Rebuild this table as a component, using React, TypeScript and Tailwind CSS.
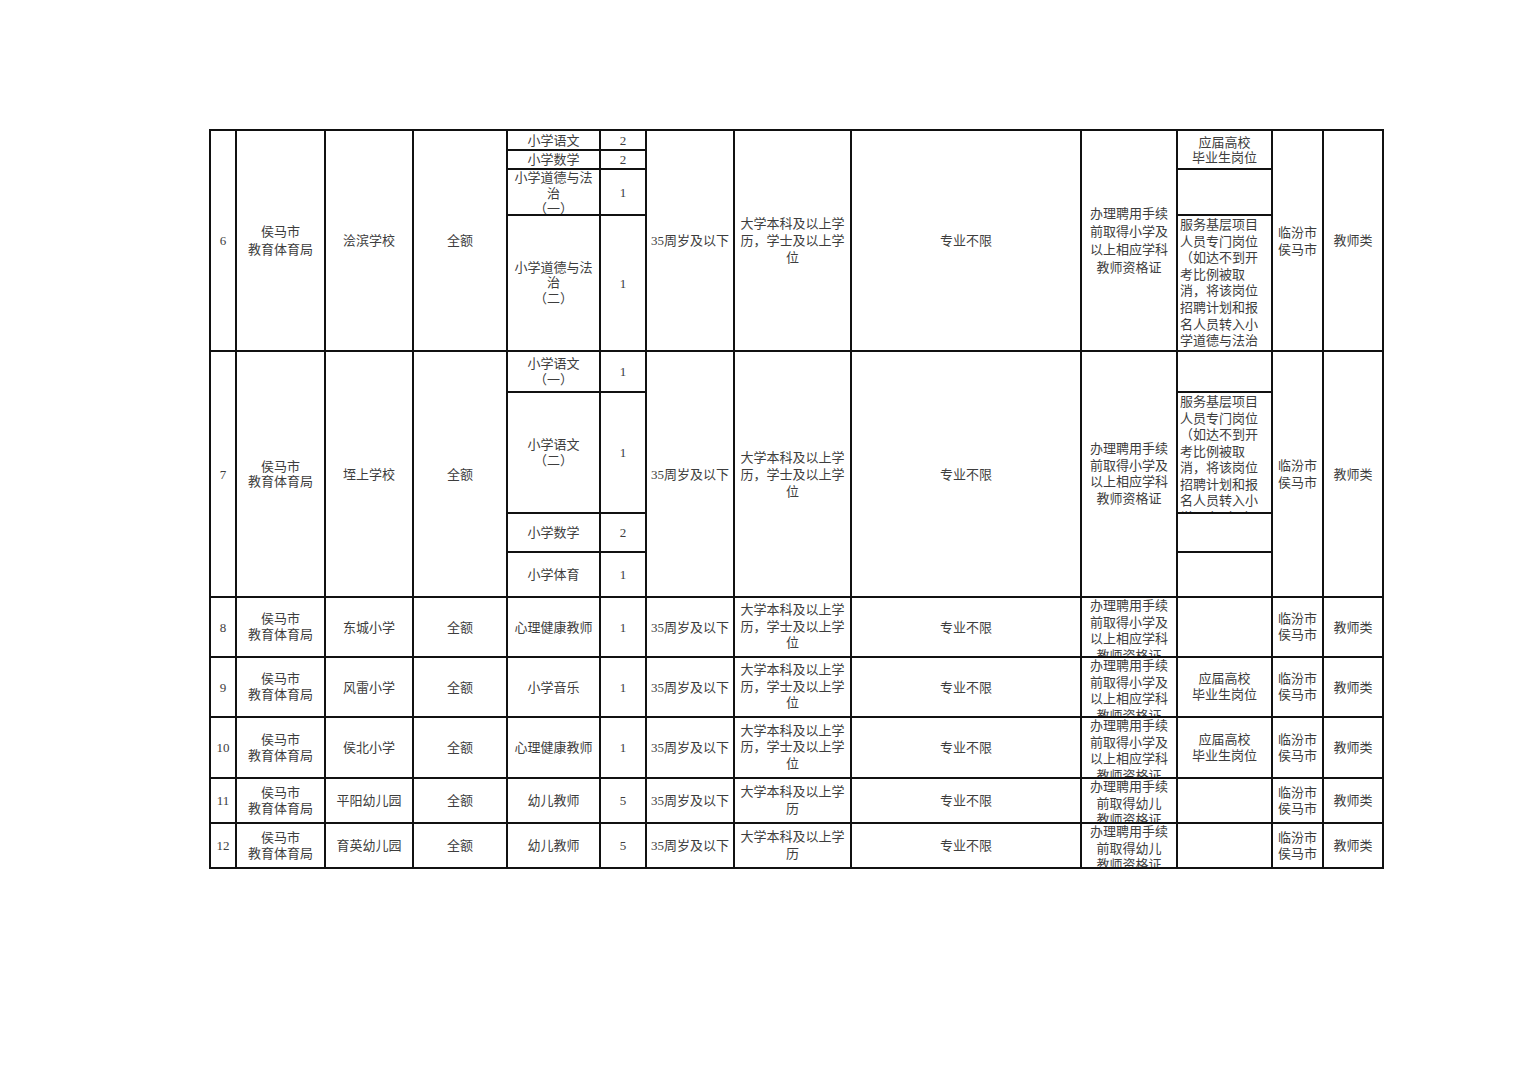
import type { ReactNode } from 'react'

// column interiors (lines are 2px, drawn by the grid gap)
// 序号 主管部门 单位 经费 岗位 人数 年龄 学历 专业 其他 备注 地点 类别
const cols = [
    'col-start-1',
    'col-start-2',
    'col-start-3',
    'col-start-4',
    'col-start-5',
    'col-start-6',
    'col-start-7',
    'col-start-8',
    'col-start-9',
    'col-start-10',
    'col-start-11',
    'col-start-12',
    'col-start-13',
]

const degree = ['大学本科及以上学', '历，学士及以上学', '位']
const degreeShort = ['大学本科及以上学', '历']
const certPrimary = ['办理聘用手续', '前取得小学及', '以上相应学科', '教师资格证']
const certKinder = ['办理聘用手续', '前取得幼儿', '教师资格证']
const fresh = ['应届高校', '毕业生岗位']
const bureau = ['侯马市', '教育体育局']
const place = ['临汾市', '侯马市']

const serviceMoral = [
    '服务基层项目',
    '人员专门岗位',
    '（如达不到开',
    '考比例被取',
    '消，将该岗位',
    '招聘计划和报',
    '名人员转入小',
    '学道德与法治',
    '（一）岗位）',
]
const serviceChinese = [
    '服务基层项目',
    '人员专门岗位',
    '（如达不到开',
    '考比例被取',
    '消，将该岗位',
    '招聘计划和报',
    '名人员转入小',
    '学语文（一）',
    '岗位）',
]

const simpleRows = [
    { row: 'row-start-9', no: '8', school: '东城小学', post: ['心理健康教师'], n: '1', edu: degree, cert: certPrimary, note: [] as string[] },
    { row: 'row-start-10', no: '9', school: '风雷小学', post: ['小学音乐'], n: '1', edu: degree, cert: certPrimary, note: fresh },
    { row: 'row-start-11', no: '10', school: '侯北小学', post: ['心理健康教师'], n: '1', edu: degree, cert: certPrimary, note: fresh },
    { row: 'row-start-12', no: '11', school: '平阳幼儿园', post: ['幼儿教师'], n: '5', edu: degreeShort, cert: certKinder, note: [] as string[] },
    { row: 'row-start-13', no: '12', school: '育英幼儿园', post: ['幼儿教师'], n: '5', edu: degreeShort, cert: certKinder, note: [] as string[] },
]

function Cell({ at, lines = [], left, lh = 'leading-[17px]' }: { at: string; lines?: string[]; left?: boolean; lh?: string }) {
    return (
        <div
            className={`${at} ${lh} flex flex-col overflow-hidden bg-white [justify-content:safe_center] ${
                left ? 'items-start pl-[2px] pt-[1px]' : 'items-center text-center'
            }`}
        >
            {lines.map((l, i) => (
                <span key={i} className="block whitespace-nowrap">
                    {l}
                </span>
            ))}
        </div>
    )
}

function Block6(): ReactNode {
    return (
        <>
            <Cell at="col-start-1 row-start-1 row-span-4" lines={['6']} />
            <Cell at="col-start-2 row-start-1 row-span-4" lines={bureau} lh="leading-[18px]" />
            <Cell at="col-start-3 row-start-1 row-span-4" lines={['浍滨学校']} />
            <Cell at="col-start-4 row-start-1 row-span-4" lines={['全额']} />

            <Cell at="col-start-5 row-start-1" lines={['小学语文']} />
            <Cell at="col-start-5 row-start-2" lines={['小学数学']} />
            <Cell at="col-start-5 row-start-3" lines={['小学道德与法', '治', '（一）']} lh="leading-[15.5px]" />
            <Cell at="col-start-5 row-start-4" lines={['小学道德与法', '治', '（二）']} lh="leading-[15.5px]" />
            <Cell at="col-start-6 row-start-1" lines={['2']} />
            <Cell at="col-start-6 row-start-2" lines={['2']} />
            <Cell at="col-start-6 row-start-3" lines={['1']} />
            <Cell at="col-start-6 row-start-4" lines={['1']} />

            <Cell at="col-start-7 row-start-1 row-span-4" lines={['35周岁及以下']} />
            <Cell at="col-start-8 row-start-1 row-span-4" lines={degree} />
            <Cell at="col-start-9 row-start-1 row-span-4" lines={['专业不限']} />
            <Cell at="col-start-10 row-start-1 row-span-4" lines={certPrimary} lh="leading-[18px]" />

            <Cell at="col-start-11 row-start-1 row-span-2" lines={fresh} lh="leading-[15px]" />
            <Cell at="col-start-11 row-start-3" />
            <Cell at="col-start-11 row-start-4" lines={serviceMoral} left lh="leading-[16.6px]" />

            <Cell at="col-start-12 row-start-1 row-span-4" lines={place} />
            <Cell at="col-start-13 row-start-1 row-span-4" lines={['教师类']} />
        </>
    )
}

function Block7(): ReactNode {
    return (
        <>
            <Cell at="col-start-1 row-start-5 row-span-4" lines={['7']} />
            <Cell at="col-start-2 row-start-5 row-span-4" lines={bureau} lh="leading-[15px]" />
            <Cell at="col-start-3 row-start-5 row-span-4" lines={['垤上学校']} />
            <Cell at="col-start-4 row-start-5 row-span-4" lines={['全额']} />

            <Cell at="col-start-5 row-start-5" lines={['小学语文', '（一）']} lh="leading-[15.5px]" />
            <Cell at="col-start-5 row-start-6" lines={['小学语文', '（二）']} lh="leading-[15.5px]" />
            <Cell at="col-start-5 row-start-7" lines={['小学数学']} />
            <Cell at="col-start-5 row-start-8" lines={['小学体育']} />
            <Cell at="col-start-6 row-start-5" lines={['1']} />
            <Cell at="col-start-6 row-start-6" lines={['1']} />
            <Cell at="col-start-6 row-start-7" lines={['2']} />
            <Cell at="col-start-6 row-start-8" lines={['1']} />

            <Cell at="col-start-7 row-start-5 row-span-4" lines={['35周岁及以下']} />
            <Cell at="col-start-8 row-start-5 row-span-4" lines={degree} />
            <Cell at="col-start-9 row-start-5 row-span-4" lines={['专业不限']} />
            <Cell at="col-start-10 row-start-5 row-span-4" lines={certPrimary} lh="leading-[16.5px]" />

            <Cell at="col-start-11 row-start-5" />
            <Cell at="col-start-11 row-start-6" lines={serviceChinese} left lh="leading-[16.5px]" />
            <Cell at="col-start-11 row-start-7" />
            <Cell at="col-start-11 row-start-8" />

            <Cell at="col-start-12 row-start-5 row-span-4" lines={place} />
            <Cell at="col-start-13 row-start-5 row-span-4" lines={['教师类']} />
        </>
    )
}

export default function App() {
    return (
        <div className="min-h-screen bg-white pt-[129px] pl-[209px] font-['Liberation_Serif','Noto_Sans_CJK_SC',serif] text-[13px] text-[#3d3d3d]">
            <div className="grid w-max gap-[2px] bg-[#111] p-[2px] grid-cols-[24px_87px_86px_92px_91px_44px_86px_115px_228px_94px_93px_49px_58px] grid-rows-[18px_17px_44px_134px_39px_119px_37px_43px_58px_58px_59px_43px_43px]">
                <Block6 />
                <Block7 />

                {simpleRows.map((r) => (
                    <div key={r.no} className="contents">
                        <Cell at={`${cols[0]} ${r.row}`} lines={[r.no]} />
                        <Cell at={`${cols[1]} ${r.row}`} lines={bureau} lh="leading-[16px]" />
                        <Cell at={`${cols[2]} ${r.row}`} lines={[r.school]} />
                        <Cell at={`${cols[3]} ${r.row}`} lines={['全额']} />
                        <Cell at={`${cols[4]} ${r.row}`} lines={r.post} />
                        <Cell at={`${cols[5]} ${r.row}`} lines={[r.n]} />
                        <Cell at={`${cols[6]} ${r.row}`} lines={['35周岁及以下']} />
                        <Cell at={`${cols[7]} ${r.row}`} lines={r.edu} lh="leading-[16.5px]" />
                        <Cell at={`${cols[8]} ${r.row}`} lines={['专业不限']} />
                        <Cell at={`${cols[9]} ${r.row}`} lines={r.cert} lh="leading-[16.5px]" />
                        <Cell at={`${cols[10]} ${r.row}`} lines={r.note} lh="leading-[16px]" />
                        <Cell at={`${cols[11]} ${r.row}`} lines={place} lh="leading-[16px]" />
                        <Cell at={`${cols[12]} ${r.row}`} lines={['教师类']} />
                    </div>
                ))}
            </div>
        </div>
    )
}
